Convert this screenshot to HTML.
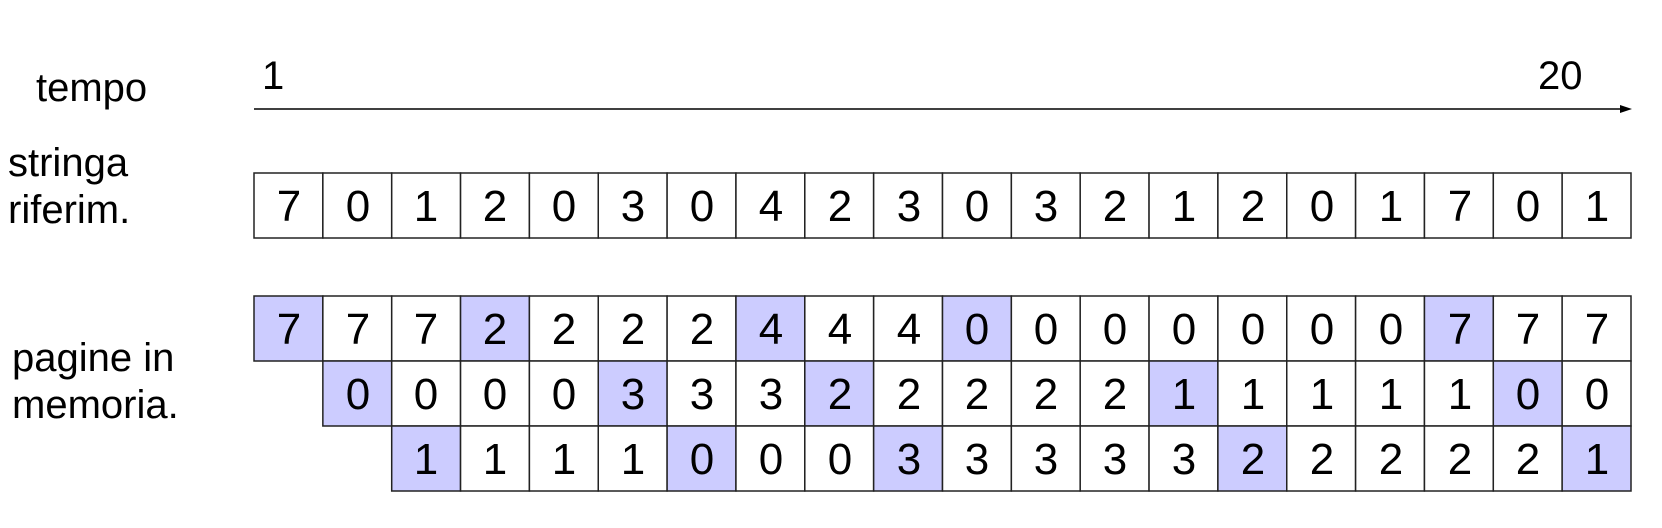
<!DOCTYPE html>
<html><head><meta charset="utf-8"><style>
html,body{margin:0;padding:0;background:#fff;width:1662px;height:528px;overflow:hidden}
svg text{font-family:"Liberation Sans",sans-serif;fill:#000}
</style></head><body>
<svg width="1662" height="528" viewBox="0 0 1662 528" xmlns="http://www.w3.org/2000/svg">
<g font-size="40">
<text x="36" y="101">tempo</text>
<text x="8" y="176">stringa</text>
<text x="8" y="223">riferim.</text>
<text x="12" y="371">pagine in</text>
<text x="12" y="418">memoria.</text>
</g>
<text x="262" y="89" font-size="40">1</text>
<text x="1538" y="89" font-size="40">20</text>
<line x1="254" y1="109" x2="1624" y2="109" stroke="#000" stroke-width="1.5"/>
<polygon points="1632,109 1620,105 1620,113" fill="#000"/>
<g stroke="#222" stroke-width="1.5" fill="#fff">
<rect x="254.00" y="173" width="68.85" height="65"/><rect x="322.85" y="173" width="68.85" height="65"/><rect x="391.70" y="173" width="68.85" height="65"/><rect x="460.55" y="173" width="68.85" height="65"/><rect x="529.40" y="173" width="68.85" height="65"/><rect x="598.25" y="173" width="68.85" height="65"/><rect x="667.10" y="173" width="68.85" height="65"/><rect x="735.95" y="173" width="68.85" height="65"/><rect x="804.80" y="173" width="68.85" height="65"/><rect x="873.65" y="173" width="68.85" height="65"/><rect x="942.50" y="173" width="68.85" height="65"/><rect x="1011.35" y="173" width="68.85" height="65"/><rect x="1080.20" y="173" width="68.85" height="65"/><rect x="1149.05" y="173" width="68.85" height="65"/><rect x="1217.90" y="173" width="68.85" height="65"/><rect x="1286.75" y="173" width="68.85" height="65"/><rect x="1355.60" y="173" width="68.85" height="65"/><rect x="1424.45" y="173" width="68.85" height="65"/><rect x="1493.30" y="173" width="68.85" height="65"/><rect x="1562.15" y="173" width="68.85" height="65"/>
<rect x="254.00" y="296" width="68.85" height="65" fill="#ccccff"/><rect x="322.85" y="296" width="68.85" height="65"/><rect x="391.70" y="296" width="68.85" height="65"/><rect x="460.55" y="296" width="68.85" height="65" fill="#ccccff"/><rect x="529.40" y="296" width="68.85" height="65"/><rect x="598.25" y="296" width="68.85" height="65"/><rect x="667.10" y="296" width="68.85" height="65"/><rect x="735.95" y="296" width="68.85" height="65" fill="#ccccff"/><rect x="804.80" y="296" width="68.85" height="65"/><rect x="873.65" y="296" width="68.85" height="65"/><rect x="942.50" y="296" width="68.85" height="65" fill="#ccccff"/><rect x="1011.35" y="296" width="68.85" height="65"/><rect x="1080.20" y="296" width="68.85" height="65"/><rect x="1149.05" y="296" width="68.85" height="65"/><rect x="1217.90" y="296" width="68.85" height="65"/><rect x="1286.75" y="296" width="68.85" height="65"/><rect x="1355.60" y="296" width="68.85" height="65"/><rect x="1424.45" y="296" width="68.85" height="65" fill="#ccccff"/><rect x="1493.30" y="296" width="68.85" height="65"/><rect x="1562.15" y="296" width="68.85" height="65"/>
<rect x="322.85" y="361" width="68.85" height="65" fill="#ccccff"/><rect x="391.70" y="361" width="68.85" height="65"/><rect x="460.55" y="361" width="68.85" height="65"/><rect x="529.40" y="361" width="68.85" height="65"/><rect x="598.25" y="361" width="68.85" height="65" fill="#ccccff"/><rect x="667.10" y="361" width="68.85" height="65"/><rect x="735.95" y="361" width="68.85" height="65"/><rect x="804.80" y="361" width="68.85" height="65" fill="#ccccff"/><rect x="873.65" y="361" width="68.85" height="65"/><rect x="942.50" y="361" width="68.85" height="65"/><rect x="1011.35" y="361" width="68.85" height="65"/><rect x="1080.20" y="361" width="68.85" height="65"/><rect x="1149.05" y="361" width="68.85" height="65" fill="#ccccff"/><rect x="1217.90" y="361" width="68.85" height="65"/><rect x="1286.75" y="361" width="68.85" height="65"/><rect x="1355.60" y="361" width="68.85" height="65"/><rect x="1424.45" y="361" width="68.85" height="65"/><rect x="1493.30" y="361" width="68.85" height="65" fill="#ccccff"/><rect x="1562.15" y="361" width="68.85" height="65"/>
<rect x="391.70" y="426" width="68.85" height="65" fill="#ccccff"/><rect x="460.55" y="426" width="68.85" height="65"/><rect x="529.40" y="426" width="68.85" height="65"/><rect x="598.25" y="426" width="68.85" height="65"/><rect x="667.10" y="426" width="68.85" height="65" fill="#ccccff"/><rect x="735.95" y="426" width="68.85" height="65"/><rect x="804.80" y="426" width="68.85" height="65"/><rect x="873.65" y="426" width="68.85" height="65" fill="#ccccff"/><rect x="942.50" y="426" width="68.85" height="65"/><rect x="1011.35" y="426" width="68.85" height="65"/><rect x="1080.20" y="426" width="68.85" height="65"/><rect x="1149.05" y="426" width="68.85" height="65"/><rect x="1217.90" y="426" width="68.85" height="65" fill="#ccccff"/><rect x="1286.75" y="426" width="68.85" height="65"/><rect x="1355.60" y="426" width="68.85" height="65"/><rect x="1424.45" y="426" width="68.85" height="65"/><rect x="1493.30" y="426" width="68.85" height="65"/><rect x="1562.15" y="426" width="68.85" height="65" fill="#ccccff"/>
</g>
<g font-size="44" text-anchor="middle">
<text x="289" y="221">7</text><text x="358" y="221">0</text><text x="426" y="221">1</text><text x="495" y="221">2</text><text x="564" y="221">0</text><text x="633" y="221">3</text><text x="702" y="221">0</text><text x="771" y="221">4</text><text x="840" y="221">2</text><text x="909" y="221">3</text><text x="977" y="221">0</text><text x="1046" y="221">3</text><text x="1115" y="221">2</text><text x="1184" y="221">1</text><text x="1253" y="221">2</text><text x="1322" y="221">0</text><text x="1391" y="221">1</text><text x="1460" y="221">7</text><text x="1528" y="221">0</text><text x="1597" y="221">1</text>
<text x="289" y="344">7</text><text x="358" y="344">7</text><text x="426" y="344">7</text><text x="495" y="344">2</text><text x="564" y="344">2</text><text x="633" y="344">2</text><text x="702" y="344">2</text><text x="771" y="344">4</text><text x="840" y="344">4</text><text x="909" y="344">4</text><text x="977" y="344">0</text><text x="1046" y="344">0</text><text x="1115" y="344">0</text><text x="1184" y="344">0</text><text x="1253" y="344">0</text><text x="1322" y="344">0</text><text x="1391" y="344">0</text><text x="1460" y="344">7</text><text x="1528" y="344">7</text><text x="1597" y="344">7</text>
<text x="358" y="409">0</text><text x="426" y="409">0</text><text x="495" y="409">0</text><text x="564" y="409">0</text><text x="633" y="409">3</text><text x="702" y="409">3</text><text x="771" y="409">3</text><text x="840" y="409">2</text><text x="909" y="409">2</text><text x="977" y="409">2</text><text x="1046" y="409">2</text><text x="1115" y="409">2</text><text x="1184" y="409">1</text><text x="1253" y="409">1</text><text x="1322" y="409">1</text><text x="1391" y="409">1</text><text x="1460" y="409">1</text><text x="1528" y="409">0</text><text x="1597" y="409">0</text>
<text x="426" y="474">1</text><text x="495" y="474">1</text><text x="564" y="474">1</text><text x="633" y="474">1</text><text x="702" y="474">0</text><text x="771" y="474">0</text><text x="840" y="474">0</text><text x="909" y="474">3</text><text x="977" y="474">3</text><text x="1046" y="474">3</text><text x="1115" y="474">3</text><text x="1184" y="474">3</text><text x="1253" y="474">2</text><text x="1322" y="474">2</text><text x="1391" y="474">2</text><text x="1460" y="474">2</text><text x="1528" y="474">2</text><text x="1597" y="474">1</text>
</g>
</svg>
</body></html>
